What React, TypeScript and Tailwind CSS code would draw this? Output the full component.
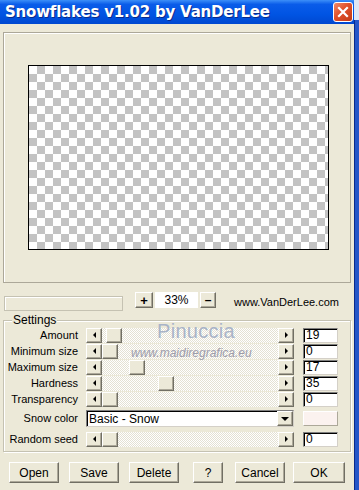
import React from "react";

const raised =
  "bg-[#ece9d8] border border-t-white border-l-white border-r-[#716f64] border-b-[#716f64] shadow-[inset_-1px_-1px_0_#aca899]";
const sunken =
  "bg-white border border-t-[#7f7f7f] border-l-[#7f7f7f] border-r-[#d4d0c8] border-b-[#d4d0c8] shadow-[inset_1px_1px_0_#000]";

function LeftArrow() {
  return <div className="w-0 h-0 border-y-[3px] border-y-transparent border-r-[3px] border-r-black" />;
}
function RightArrow() {
  return <div className="w-0 h-0 border-y-[3px] border-y-transparent border-l-[3px] border-l-black" />;
}

function ArrowBtn({ dir }: { dir: "l" | "r" }) {
  return (
    <div className={`w-[16px] h-[15px] flex items-center justify-center ${raised}`}>
      {dir === "l" ? <LeftArrow /> : <RightArrow />}
    </div>
  );
}

function SliderRow({ label, value, thumb }: { label: string; value: string; thumb: number }) {
  return (
    <div className="flex items-center h-[16px]">
      <div className="w-[75px] text-right pr-[1px] text-[11px] leading-none text-black">{label}</div>
      <div className="w-[7px]" />
      <ArrowBtn dir="l" />
      <div className="w-[176px] h-[15px] flex items-center bg-[repeating-conic-gradient(#ffffff_0_25%,#e4e1d3_0_50%)] bg-[length:2px_2px]">
        <div className={`w-[16px] h-[15px] ${raised}`} style={{ marginLeft: thumb }} />
      </div>
      <ArrowBtn dir="r" />
      <div className="w-[9px]" />
      <div className={`w-[35px] h-[15px] ${sunken} text-[12px] leading-[13px] pl-[2px] text-black`}>{value}</div>
    </div>
  );
}

function Btn({ label, w, ml }: { label: string; w: number; ml: number }) {
  return (
    <div
      className={`h-[21px] flex items-center justify-center text-[12px] text-black ${raised}`}
      style={{ width: w, marginLeft: ml }}
    >
      {label}
    </div>
  );
}

export default function App() {
  return (
    <div
      className="w-[359px] h-[490px] flex bg-[#ece9d8] overflow-hidden"
      style={{ fontFamily: '"Liberation Sans", Arial, sans-serif' }}
    >
      <div className="w-[354px] h-full flex flex-col">
        {/* Title bar */}
        <div className="h-[24px] flex items-center bg-[linear-gradient(180deg,#3c8ff8_0%,#0a5ce9_18%,#0054e3_60%,#0048d0_100%)]">
          <div
            className="ml-[5px] text-white font-bold text-[15px] leading-none tracking-[-0.2px] [text-shadow:1px_1px_0_#0a2a8a]"
            style={{ fontFamily: '"DejaVu Sans", sans-serif' }}
          >
            Snowflakes v1.02 by VanDerLee
          </div>
          <div className="ml-auto mr-[1px] w-[20px] h-[20px] rounded-[3px] border border-white bg-[linear-gradient(135deg,#f08a6a_0%,#e0502a_45%,#c23a14_100%)] flex items-center justify-center">
            <svg width="12" height="12" viewBox="0 0 12 12">
              <path d="M2 2 L10 10 M10 2 L2 10" stroke="white" strokeWidth="2.2" strokeLinecap="square" />
            </svg>
          </div>
        </div>

        {/* Body */}
        <div className="flex-1 flex flex-col px-[3px] relative">
          {/* Preview panel */}
          <div className="mt-[8px] h-[251px] border border-[#aca899] shadow-[inset_1px_1px_0_#fff] flex items-center justify-center pl-[2px] pb-[1px]">
            <div className="w-[301px] h-[185px] border border-black bg-[repeating-conic-gradient(#c3c3c3_0_25%,#ffffff_0_50%)] bg-[length:16px_16px]" />
          </div>

          {/* Zoom row */}
          <div className="mt-[9px] h-[19px] flex items-start">
            <div className="ml-[1px] mt-[4px] w-[119px] h-[15px] border border-[#c5c2b2] shadow-[inset_1px_1px_0_#fff]" />
            <div className={`ml-[12px] w-[18px] h-[16px] flex items-center justify-center text-[13px] font-bold leading-none ${raised}`}>
              +
            </div>
            <div className="ml-[2px] w-[43px] h-[16px] bg-white flex items-center justify-center text-[12px] text-black">33%</div>
            <div className={`ml-[2px] w-[16px] h-[16px] flex items-center justify-center text-[12px] font-bold leading-none ${raised}`}>
              –
            </div>
            <div className="ml-[18px] mt-[2px] text-[11px] text-black">www.VanDerLee.com</div>
          </div>

          {/* Settings group */}
          <div className="mt-[9px] relative border border-[#c5c2b2] shadow-[inset_1px_1px_0_#fff,1px_1px_0_#fff] pt-[6px] pb-[4px]">
            <div className="absolute -top-[8px] left-[8px] bg-[#ece9d8] px-[1px] text-[12px] leading-[14px] text-black">Settings</div>
            <SliderRow label="Amount" value="19" thumb={4} />
            <SliderRow label="Minimum size" value="0" thumb={0} />
            <SliderRow label="Maximum size" value="17" thumb={27} />
            <SliderRow label="Hardness" value="35" thumb={56} />
            <SliderRow label="Transparency" value="0" thumb={0} />
            <div className="mt-[3px] flex items-center h-[17px]">
              <div className="w-[75px] text-right pr-[1px] text-[11px] leading-none text-black">Snow color</div>
              <div className="w-[7px]" />
              <div className={`w-[208px] h-[17px] flex items-center ${sunken}`}>
                <div className="flex-1 pl-[2px] text-[12px] text-black leading-none">Basic - Snow</div>
                <div className={`w-[16px] h-[15px] flex items-center justify-center ${raised}`}>
                  <div className="w-0 h-0 border-x-[4px] border-x-transparent border-t-[4px] border-t-black" />
                </div>
              </div>
              <div className="w-[9px]" />
              <div className="w-[35px] h-[15px] bg-[#fbf2ef] border border-t-white border-l-white border-r-[#aca899] border-b-[#aca899]" />
            </div>
            <div className="mt-[4px]">
              <SliderRow label="Random seed" value="0" thumb={0} />
            </div>

            {/* watermark */}
            <div className="absolute left-[153px] top-[0px] text-[20px] leading-none text-[#a9b4c8] tracking-[0.3px]">Pinuccia</div>
            <div className="absolute left-[127px] top-[26px] text-[12px] leading-none italic text-[#9c9cab]">www.maidiregrafica.eu</div>
          </div>

          {/* Buttons */}
          <div className="mt-[10px] flex">
            <Btn label="Open" w={50} ml={6} />
            <Btn label="Save" w={50} ml={10} />
            <Btn label="Delete" w={50} ml={10} />
            <Btn label="?" w={30} ml={14} />
            <Btn label="Cancel" w={50} ml={12} />
            <Btn label="OK" w={52} ml={8} />
          </div>
        </div>
      </div>
      <div className="w-[5px] h-full flex flex-col">
        <div className="h-[20px] bg-[#dfe6f4]" />
        <div className="flex-1 bg-[#2456c8] border-l border-l-[#0a2a8a]" />
      </div>
    </div>
  );
}
